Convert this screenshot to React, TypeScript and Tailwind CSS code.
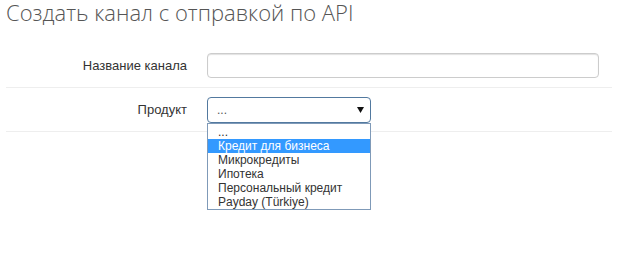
const options = [
  "...",
  "Кредит для бизнеса",
  "Микрокредиты",
  "Ипотека",
  "Персональный кредит",
  "Payday (Türkiye)",
];

export default function App() {
  return (
    <div className="min-h-[260px] w-full bg-white px-[6px] pt-px font-['Liberation_Sans',Arial,sans-serif] text-[13px] text-[#333]">
      <h1 className="font-['Open_Sans',sans-serif] text-[22px] font-light leading-[22px] text-[#555]">
        Создать канал с отправкой по API
      </h1>

      <div className="mt-[21px]">
        {/* Название канала */}
        <div className="grid grid-cols-[181px_1fr] items-center gap-x-5 border-b border-[#eee] py-[9px]">
          <label className="text-right">Название канала</label>
          <input
            type="text"
            className="h-[25px] w-[392px] rounded-[4px] border border-[#ccc] bg-white shadow-[inset_0_1px_1px_rgba(0,0,0,0.12)] outline-none"
          />
        </div>

        {/* Продукт */}
        <div className="grid grid-cols-[181px_1fr] items-center gap-x-5 border-b border-[#eee] pb-[8px] pt-[9px]">
          <label className="text-right">Продукт</label>
          <div className="relative w-[164px]">
            <div className="flex h-[26px] items-center justify-between rounded-[4px] border border-[#52799f] bg-white pl-[9px] pr-[6px] text-[12px] text-[#555]">
              <span>...</span>
              <svg width="7" height="6" viewBox="0 0 7 6" className="mb-px">
                <path d="M0 0h7L3.5 6z" fill="#111" />
              </svg>
            </div>
            <ul className="absolute left-0 top-full z-10 w-full border border-[#7f9ab8] bg-white pt-px text-[12px] leading-[14px]">
              {options.map((o, i) => (
                <li
                  key={o}
                  className={
                    i === 1
                      ? "h-[14px] bg-[#3399ff] pl-[10px] text-white"
                      : "h-[14px] pl-[10px] text-[#333]"
                  }
                >
                  {o}
                </li>
              ))}
            </ul>
          </div>
        </div>
      </div>
    </div>
  );
}
